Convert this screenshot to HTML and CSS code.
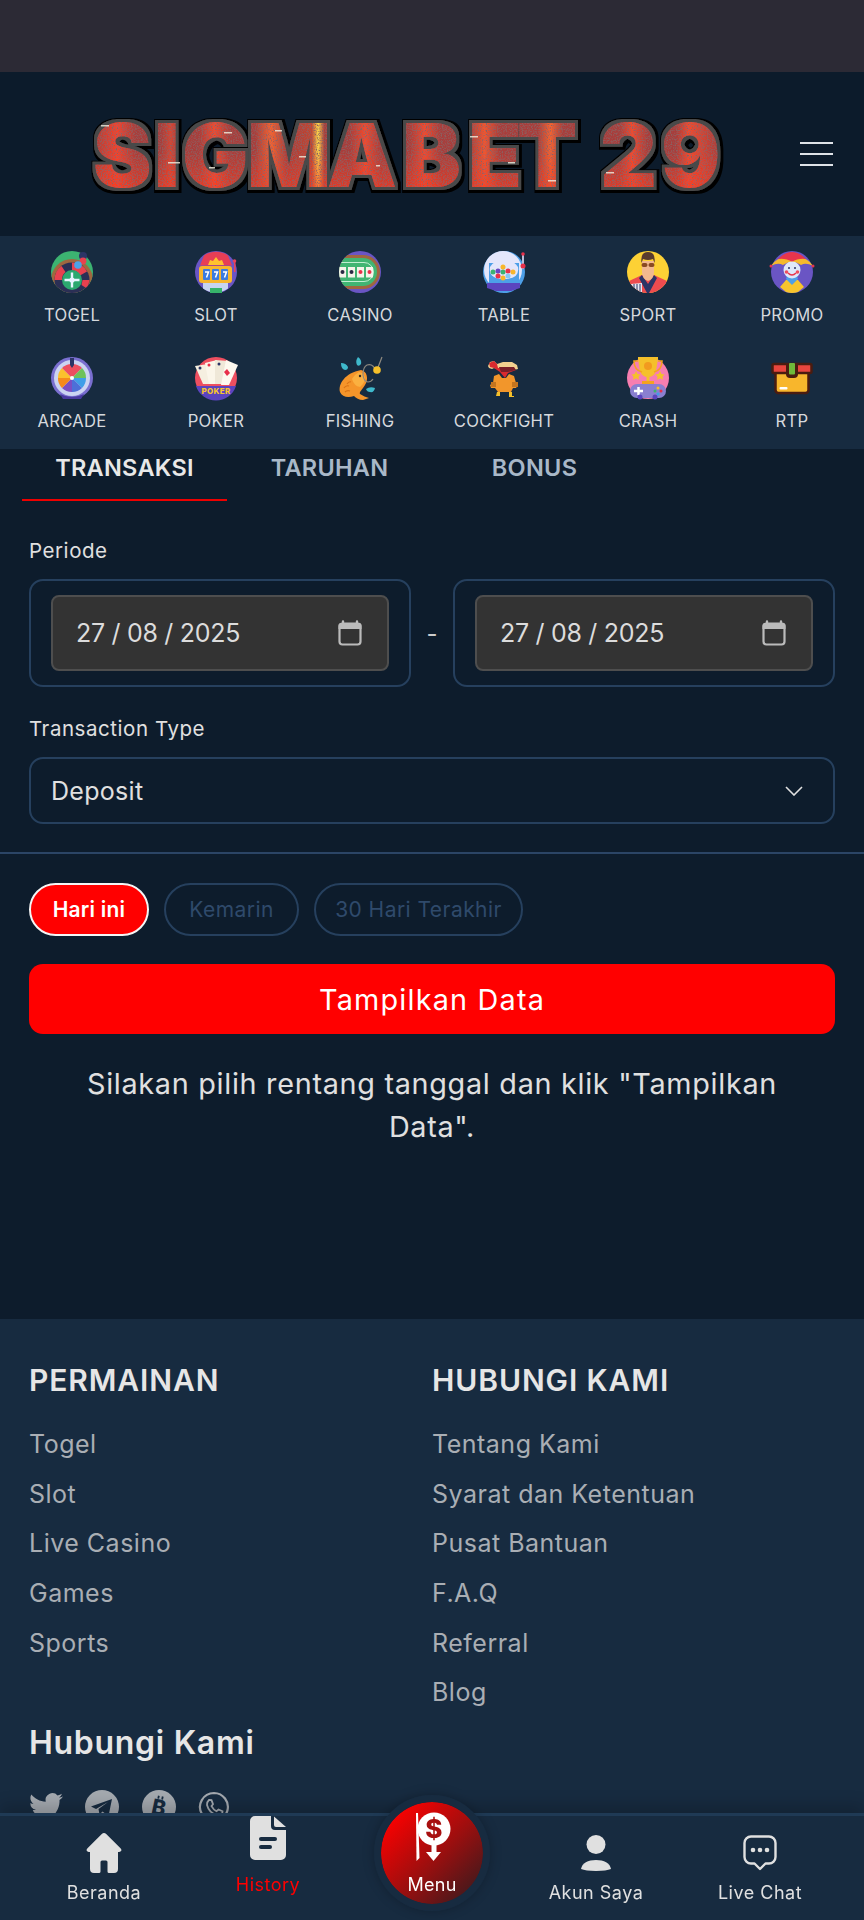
FILE: index.html
```html
<!DOCTYPE html>
<html lang="id">
<head>
<meta charset="utf-8">
<title>SIGMABET29</title>
<link rel="stylesheet" href="styles.css">
</head>
<body>
<div class="status"></div>
<header class="head">
  <svg class="logo" width="660" height="100" viewBox="0 0 660 100" role="img" aria-label="SIGMABET 29">
    <defs>
      <clipPath id="c42"><circle cx="21" cy="21" r="21"/></clipPath>
      <linearGradient id="flame" x1="12" y1="0" x2="640" y2="0" gradientUnits="userSpaceOnUse">
        <stop offset="0" stop-color="#a83c3a"/><stop offset=".04" stop-color="#f5432a"/><stop offset=".07" stop-color="#a93d3b"/>
        <stop offset=".11" stop-color="#a93d3b"/><stop offset=".125" stop-color="#d8452f"/><stop offset=".14" stop-color="#a93d3b"/>
        <stop offset=".17" stop-color="#a93d3b"/><stop offset=".195" stop-color="#f5492a"/><stop offset=".22" stop-color="#a93d3b"/>
        <stop offset=".26" stop-color="#a93d3b"/><stop offset=".285" stop-color="#f8642c"/><stop offset=".31" stop-color="#a93d3b"/>
        <stop offset=".35" stop-color="#c4452e"/><stop offset=".36" stop-color="#ffd84a"/><stop offset=".37" stop-color="#a93d3b"/>
        <stop offset=".41" stop-color="#a93d3b"/><stop offset=".435" stop-color="#f5492a"/><stop offset=".46" stop-color="#a93d3b"/>
        <stop offset=".505" stop-color="#a93d3b"/><stop offset=".53" stop-color="#f5492a"/><stop offset=".555" stop-color="#a93d3b"/>
        <stop offset=".6" stop-color="#a93d3b"/><stop offset=".625" stop-color="#f5552a"/><stop offset=".65" stop-color="#a93d3b"/>
        <stop offset=".71" stop-color="#a93d3b"/><stop offset=".73" stop-color="#f8642c"/><stop offset=".75" stop-color="#a93d3b"/>
        <stop offset=".84" stop-color="#a93d3b"/><stop offset=".86" stop-color="#f5492a"/><stop offset=".885" stop-color="#a93d3b"/>
        <stop offset=".93" stop-color="#a93d3b"/><stop offset=".95" stop-color="#f5492a"/><stop offset="1" stop-color="#a93d3b"/>
      </linearGradient>
      <linearGradient id="heat" x1="0" y1="10" x2="0" y2="82" gradientUnits="userSpaceOnUse">
        <stop offset=".45" stop-color="#ff3a1c" stop-opacity="0"/><stop offset="1" stop-color="#ff3a1c" stop-opacity=".65"/>
      </linearGradient>
      <pattern id="lava" patternUnits="userSpaceOnUse" width="660" height="100">
        <rect width="660" height="100" fill="url(#flame)"/>
        <rect width="660" height="100" fill="url(#heat)"/>
      </pattern>
      <filter id="burn" x="-5%" y="-20%" width="110%" height="140%">
        <feTurbulence type="fractalNoise" baseFrequency=".8" numOctaves="2" seed="4" result="n"/>
        <feColorMatrix in="n" type="matrix" values="0 0 0 0 .25  0 0 0 0 .12  0 0 0 0 .12  0 0 0 3 -1.300" result="g"/>
        <feComposite in="g" in2="SourceAlpha" operator="in" result="grain"/>
        <feMorphology in="SourceAlpha" operator="dilate" radius="2.500" result="d1"/>
        <feFlood flood-color="#4a4a4a"/><feComposite in2="d1" operator="in" result="edge"/>
        <feMorphology in="SourceAlpha" operator="dilate" radius="5" result="d2"/>
        <feOffset in="d2" dx="1" dy="1" result="d3"/>
        <feFlood flood-color="#000"/><feComposite in2="d3" operator="in" result="blk"/>
        <feMerge><feMergeNode in="blk"/><feMergeNode in="edge"/><feMergeNode in="SourceGraphic"/><feMergeNode in="grain"/></feMerge>
      </filter>
    </defs>
    <text class="logo-text" y="79" fill="url(#lava)" filter="url(#burn)" x="13 74 102 167 247 322 388 437 590 520 581">SIGMABET 29</text>
    <g fill="#f4f0e0" opacity=".8"><rect x="21" y="17" width="8" height="1.500"/><rect x="88" y="54" width="12" height="1.500"/><rect x="129" y="59" width="6" height="1.500"/><rect x="144" y="24" width="8" height="1.500"/><rect x="195" y="22" width="7" height="1.500"/><rect x="219" y="48" width="7" height="1.500"/><rect x="296" y="57" width="4" height="1.500"/><rect x="390" y="28" width="8" height="1.500"/><rect x="428" y="54" width="7" height="1.500"/><rect x="468" y="72" width="8" height="1.500"/><rect x="526" y="64" width="8" height="1.500"/></g>
  </svg>
  <button class="burger" aria-label="Menu"><span></span><span></span><span></span></button>
</header>

<nav class="cats">
  <a class="cat"><svg class="ci" viewBox="0 0 42 42"><g clip-path="url(#c42)"><rect width="42" height="42" fill="#3cb371"/><circle cx="21" cy="29" r="21" fill="#a0673f"/><circle cx="21" cy="29" r="17.500" fill="#2b2f55"/><path d="M21 11.500a17.500 17.500 0 0 1 15 9l-7 4a9 9 0 0 0-8-5z" fill="#e8414f"/><path d="M3.500 29a17.500 17.500 0 0 1 7-14l4 6a10 10 0 0 0-3.500 8z" fill="#e8414f"/><path d="M38.500 29l-7 0-1 5 6 4z" fill="#e8414f"/></g><circle cx="21" cy="29" r="10" fill="#2ca86f"/><path d="M21 21.500v15M13.500 29h15" stroke="#e9f4ff" stroke-width="2.400"/><circle cx="21" cy="29" r="2.600" fill="#e9f4ff"/><circle cx="32" cy="5" r="4" fill="#2c3566"/><circle cx="32" cy="10" r="3.400" fill="#e8414f"/><circle cx="27" cy="14" r="3.800" fill="#4aa3e8"/></svg><span>TOGEL</span></a>
  <a class="cat"><svg class="ci" viewBox="0 0 42 42"><circle cx="21" cy="21" r="21" fill="#6a55c4"/><path d="M9 4.500a21 21 0 0 1 24 0l4 10H5z" fill="#e83e55"/><path d="M13 14l2-5 3 1 3-4 3 4 3-1 2 5z" fill="#ffc22e"/><rect x="4" y="15" width="33" height="17" rx="3" fill="#f8b62c"/><g fill="#3a7be0"><rect x="8" y="18" width="7" height="11" rx="1"/><rect x="17" y="18" width="7" height="11" rx="1"/><rect x="26" y="18" width="7" height="11" rx="1"/></g><path d="M10 21h3.500l-2 5.500M19 21h3.500l-2 5.500M28 21h3.500l-2 5.500" stroke="#fff" stroke-width="1.500" fill="none"/><rect x="39" y="11" width="1.500" height="10" fill="#e9415a"/><circle cx="39.500" cy="10" r="1.800" fill="#e9415a"/><path d="M8 32h25v5.500a21 21 0 0 1-25 0z" fill="#c7d4f0"/><rect x="15" y="37" width="12" height="5" fill="#37b36a"/></svg><span>SLOT</span></a>
  <a class="cat"><svg class="ci" viewBox="0 0 42 42"><g clip-path="url(#c42)"><rect width="42" height="42" fill="#6a55c4"/><path d="M0 4h24a17 17 0 0 1 0 34H0z" fill="#a0673f"/><path d="M0 7h24a14 14 0 0 1 0 28H0z" fill="#41b573"/><path d="M0 11.500h25a9.500 9.500 0 0 1 0 19H0" fill="none" stroke="#c2eed2" stroke-width="1"/><g fill="#f5f3ea"><rect x="0" y="16" width="7" height="10.500"/><rect x="9" y="16" width="7" height="10.500"/><rect x="18" y="16" width="7" height="10.500"/><rect x="27" y="16" width="7" height="10.500"/></g><g fill="#2a2a44"><circle cx="3.500" cy="21" r="2"/><circle cx="12.500" cy="21" r="2"/></g><g fill="#e8304a"><circle cx="21.500" cy="21" r="2"/><circle cx="30.500" cy="21" r="2"/></g></g></svg><span>CASINO</span></a>
  <a class="cat"><svg class="ci" viewBox="0 0 42 42"><circle cx="21" cy="21" r="21" fill="#4d9fe8"/><circle cx="20" cy="19" r="19" fill="#e4e6fb"/><path d="M6 12h30v22H6z" fill="#4d9fe8"/><path d="M7 16a16 14 0 0 1 28 0q2 12-14 12T7 16z" fill="#e4e6fb"/><circle cx="10" cy="21" r="2.500" fill="#3cb371"/><circle cx="15" cy="20" r="2.500" fill="#6a45c4"/><circle cx="20" cy="21" r="2.500" fill="#3cb371"/><circle cx="25" cy="20" r="2.500" fill="#e8304a"/><circle cx="30" cy="21" r="2.500" fill="#f8b62c"/><circle cx="20" cy="16" r="2.500" fill="#f8b62c"/><circle cx="15" cy="25" r="2.500" fill="#e8304a"/><circle cx="20" cy="27" r="2.500" fill="#f8b62c"/><circle cx="25" cy="25" r="2.500" fill="#86c8f5"/><path d="M4 32h33v5l-9 3H13l-9-3z" fill="#5b44bf"/><rect x="39" y="4" width="2" height="14" fill="#b9bedb"/><circle cx="40" cy="3" r="1.800" fill="#e8304a"/><circle cx="40" cy="15" r="2.500" fill="#e8304a"/></svg><span>TABLE</span></a>
  <a class="cat"><svg class="ci" viewBox="0 0 42 42"><circle cx="21" cy="21" r="21" fill="#fdd135"/><g clip-path="url(#c42)"><path d="M2 30l13-6h12l13 6v12H2z" fill="#ee4b4f"/><path d="M15 24l6 9 6-9 3 3-8 15h-2L12 27z" fill="#2c3566"/><path d="M4 33l11-1v10H6z" fill="#e8eaf5"/><path d="M7 33v9M10 33v9M13 33v9" stroke="#2c3566" stroke-width="1"/></g><path d="M15 10h12v11q0 7-6 9-6-2-6-9z" fill="#f2b98f"/><path d="M14.500 12Q13 1 21 1t6.500 11L26 8q-5 2-10 0z" fill="#5a3b2e"/><rect x="14.500" y="12" width="6" height="4" rx="2" fill="#8a4a22"/><rect x="21.500" y="12" width="6" height="4" rx="2" fill="#8a4a22"/></svg><span>SPORT</span></a>
  <a class="cat"><svg class="ci" viewBox="0 0 42 42"><circle cx="21" cy="21" r="21" fill="#6a55c4"/><path d="M0 15Q7 4 21 7q14-3 21 8-7-4-12-1-4-3-9-3t-9 3q-5-3-12 1" fill="#f5b92c"/><path d="M7 8Q14 1 21 1t14 7q-8-1-14 3-6-4-14-3z" fill="#e8354c"/><path d="M9 36l6-7h12l6 7-6 5q-6 2-12 0z" fill="#f8c52c"/><path d="M15 28l6 6 6-6-1-3H16z" fill="#4d9fe8"/><circle cx="21" cy="19" r="8.500" fill="#dfe8fa"/><circle cx="15.500" cy="21" r="1.800" fill="#ef4e5e"/><circle cx="26.500" cy="21" r="1.800" fill="#ef4e5e"/><circle cx="18" cy="17" r="1" fill="#2c3566"/><circle cx="24" cy="17" r="1" fill="#2c3566"/><path d="M17 22q4 4 8 0" stroke="#e8354c" stroke-width="1.500" fill="none"/><circle cx="0" cy="15" r="1.500" fill="#e8354c"/><circle cx="42" cy="15" r="1.500" fill="#e8354c"/></svg><span>PROMO</span></a>

  <a class="cat"><svg class="ci" viewBox="0 0 42 42"><circle cx="21" cy="21" r="21" fill="#7a6fd0"/><circle cx="21" cy="21" r="18" fill="#ccd4f2"/><path d="M21 21V7a14 14 0 0 1 10 4z" fill="#ee4f60"/><path d="M21 21l10-10a14 14 0 0 1 4 10z" fill="#6ec25b"/><path d="M21 21h14a14 14 0 0 1-4 10z" fill="#3f9ee8"/><path d="M21 21l10 10a14 14 0 0 1-10 4z" fill="#4d6fd8"/><path d="M21 21v14a14 14 0 0 1-10-4z" fill="#7a4fc4"/><path d="M21 21L11 31a14 14 0 0 1-4-10z" fill="#f58a1c"/><path d="M21 21H7a14 14 0 0 1 4-10z" fill="#fbc02d"/><path d="M21 21L11 11a14 14 0 0 1 10-4z" fill="#ee4f60"/><circle cx="21" cy="21" r="2" fill="#fff"/><path d="M19 8V1h4v7l-2 3z" fill="#2c3566"/><path d="M9 37q12 6 24 0l-3 5H12z" fill="#4a3aa0"/></svg><span>ARCADE</span></a>
  <a class="cat"><svg class="ci" viewBox="0 0 42 42"><circle cx="21" cy="21" r="21" fill="#ee4f60"/><path d="M1 29h40a21 21 0 0 1-40 0z" fill="#5b44bf"/><path d="M0 9l13-2 4 20H8z" fill="#f5efe0"/><path d="M10 6l12-3 4 24H14z" fill="#fbf6ea"/><path d="M20 3l13 1-2 23H20z" fill="#efe8d8"/><path d="M31 3l12 5-9 20H26z" fill="#fdf9ef"/><circle cx="5" cy="11" r="1.500" fill="#2c3566"/><circle cx="14" cy="8" r="1.500" fill="#e8304a"/><circle cx="24" cy="7" r="1.500" fill="#2c3566"/><path d="M29 15l3-3 3 4-3 3z" fill="#e8304a"/><text class="poker" x="21" y="37">POKER</text></svg><span>POKER</span></a>
  <a class="cat"><svg class="ci" viewBox="0 0 42 42"><path d="M22 13C28 14 30 22 26 28 23 33 20 35 21 37 24 39 27 40 30 41L24 43C20 43 17 41 15 39 9 41 3 40 1 35-1 27 6 16 22 13z" fill="#f5952a"/><path d="M20 15q6 1 6 8-2 5-5 7-6-1-8-8 3-5 7-7z" fill="#fbb040"/><circle cx="21" cy="19" r="1.200" fill="#3a2c20"/><path d="M5 31q2-3 5-2M8 27q2-3 4-2M6 35q2-2 5-1" stroke="#d97215" stroke-width="1.200" fill="none"/><path d="M2 6q5 0 7 4 0 3-3 3-4-1-4-7z" fill="#3fb9cc"/><path d="M19 0q4 3 3 7-2 3-4 1-2-4 1-8z" fill="#3fb9cc"/><path d="M27 32q4-3 9-1-1 5-5 4-3 0-4-3z" fill="#3fb9cc"/><path d="M43 0l-5 13M37 14q-3-8-9-6-4 2-4 10 1 7 5 7 3 0 5-3" stroke="#8f8a80" stroke-width="1.200" fill="none"/><circle cx="38" cy="13" r="3.800" fill="#f5c02a"/></svg><span>FISHING</span></a>
  <a class="cat"><svg class="ci" viewBox="0 0 42 42"><path d="M5 9l2-4 4-1 3 3 6-2 9 0 5 3 1 4-8 2-9-1-7-2-2 1-3-1z" fill="#f2d08f"/><path d="M6 6l5-2 3 3 1 4 10-1 8 3-8 3-3 5-5-6-6-4-4-1z" fill="#d92a2e"/><path d="M16 10l15 0 2 3-8 2H18z" fill="#7a1f28"/><path d="M11 19l5-2 3 4 4 0 3-4 5 2 2 7 2 2-2 3h-3l-2 4H15l-3-4H8l-1-3 3-2z" fill="#f2962b"/><path d="M8 25h5v5H8zM29 25h6v5h-6z" fill="#c5751f"/><path d="M14 35h3v4h-4zM26 35h3v4h2v1h-5z" fill="#f5c02a"/></svg><span>COCKFIGHT</span></a>
  <a class="cat"><svg class="ci" viewBox="0 0 42 42"><circle cx="21" cy="21" r="21" fill="#f77eb0"/><path d="M11 0h20v2l-2 12q-2 6-8 6-6 0-8-6L11 2z" fill="#f5c02a"/><path d="M11 4H7q0 9 8 11M31 4h4q0 9-8 11" fill="none" stroke="#f5a21f" stroke-width="1.600"/><circle cx="21" cy="9" r="4" fill="#f29a1f"/><rect x="19.500" y="19" width="3" height="6" fill="#f5c02a"/><rect x="15" y="24" width="12" height="3" fill="#f5a21f"/><path d="M9 14l1.500 3 3 .4-2 2.300.5 3-3-1.500-3 1.500.5-3-2-2.300 3-.4zM33 14l1.500 3 3 .4-2 2.300.5 3-3-1.500-3 1.500.5-3-2-2.300 3-.4z" fill="#f5c02a"/><rect x="3" y="27" width="36" height="14" rx="7" fill="#8a7fd0"/><path d="M7 34h9M11.500 30v8" stroke="#fff" stroke-width="2.500"/><circle cx="31" cy="31" r="1.500" fill="#f5c02a"/><circle cx="28" cy="34" r="1.500" fill="#3cb371"/><circle cx="34" cy="34" r="1.500" fill="#e8304a"/><circle cx="31" cy="37" r="1.500" fill="#3f9ee8"/><circle cx="13" cy="40" r="2.500" fill="#5b44bf"/><circle cx="28" cy="40" r="2.500" fill="#5b44bf"/></svg><span>CRASH</span></a>
  <a class="cat"><svg class="ci" viewBox="0 0 42 42"><rect x="4.500" y="12" width="33" height="24" rx="3" fill="#f8b62c" stroke="#4a1c10" stroke-width="2.500"/><rect x="1.500" y="7" width="39" height="9" rx="1.500" fill="#e9463e" stroke="#4a1c10" stroke-width="2.500"/><path d="M15 6h12v11a4 4 0 0 1-4 4h-4a4 4 0 0 1-4-4z" fill="#4a1c10"/><rect x="18" y="6" width="6" height="11.500" rx="1" fill="#6fb93a"/><rect x="8.500" y="30" width="8" height="2.500" rx="1" fill="#fff"/></svg><span>RTP</span></a>
</nav>

<main class="page">
  <div class="tabs">
    <a class="tab on">TRANSAKSI</a>
    <a class="tab">TARUHAN</a>
    <a class="tab">BONUS</a>
  </div>

  <section class="filters">
    <label class="lbl">Periode</label>
    <div class="range">
      <div class="shell"><div class="date"><span>27 / 08 / 2025</span>
        <svg class="cal" viewBox="0 0 26 26"><path d="M6 1.500v3M20 1.500v3" stroke="#bbb" stroke-width="2.400" stroke-linecap="round"/><path d="M4 3h18a2.500 2.500 0 0 1 2.500 2.500V9h-23V5.500A2.500 2.500 0 0 1 4 3z" fill="#bbb"/><rect x="2.500" y="3.500" width="21" height="21" rx="3" fill="none" stroke="#bbb" stroke-width="2.200"/></svg></div></div>
      <span class="dash">-</span>
      <div class="shell"><div class="date"><span>27 / 08 / 2025</span>
        <svg class="cal" viewBox="0 0 26 26"><path d="M6 1.500v3M20 1.500v3" stroke="#bbb" stroke-width="2.400" stroke-linecap="round"/><path d="M4 3h18a2.500 2.500 0 0 1 2.500 2.500V9h-23V5.500A2.500 2.500 0 0 1 4 3z" fill="#bbb"/><rect x="2.500" y="3.500" width="21" height="21" rx="3" fill="none" stroke="#bbb" stroke-width="2.200"/></svg></div></div>
    </div>
    <label class="lbl lbl-type">Transaction Type</label>
    <div class="select"><span>Deposit</span>
      <svg class="chev" viewBox="0 0 18 10"><path d="M1 1l8 8 8-8" fill="none" stroke="#e0e0e0" stroke-width="1.600"/></svg></div>
  </section>

  <hr class="rule">

  <section class="results">
    <div class="pills">
      <button class="pill on">Hari ini</button>
      <button class="pill">Kemarin</button>
      <button class="pill">30 Hari Terakhir</button>
    </div>
    <button class="go">Tampilkan Data</button>
    <p class="hint">Silakan pilih rentang tanggal dan klik "Tampilkan Data".</p>
  </section>
</main>

<footer class="foot">
  <div class="fcols">
    <div class="fcol">
      <h3 class="fh">PERMAINAN</h3>
      <ul class="flist"><li>Togel</li><li>Slot</li><li>Live Casino</li><li>Games</li><li>Sports</li></ul>
    </div>
    <div class="fcol">
      <h3 class="fh">HUBUNGI KAMI</h3>
      <ul class="flist"><li>Tentang Kami</li><li>Syarat dan Ketentuan</li><li>Pusat Bantuan</li><li>F.A.Q</li><li>Referral</li><li>Blog</li></ul>
    </div>
  </div>
  <h3 class="fh2">Hubungi Kami</h3>
  <div class="social">
    <svg class="so" viewBox="0 0 24 24"><path d="M23.953 4.570a10 10 0 0 1-2.825.775 4.958 4.958 0 0 0 2.163-2.723c-.951.555-2.005.959-3.127 1.184a4.920 4.920 0 0 0-8.384 4.482C7.690 8.095 4.067 6.130 1.640 3.162a4.822 4.822 0 0 0-.666 2.475c0 1.710.870 3.213 2.188 4.096a4.904 4.904 0 0 1-2.228-.616v.060a4.923 4.923 0 0 0 3.946 4.827 4.996 4.996 0 0 1-2.212.085 4.936 4.936 0 0 0 4.604 3.417 9.867 9.867 0 0 1-6.102 2.105c-.390 0-.779-.023-1.170-.067a13.995 13.995 0 0 0 7.557 2.209c9.053 0 13.998-7.496 13.998-13.985 0-.210 0-.420-.015-.630A9.935 9.935 0 0 0 24 4.590z" fill="#a4a9af"/></svg>
    <svg class="so" viewBox="0 0 34 34"><circle cx="17" cy="17" r="17" fill="#a4a9af"/><path d="M6 16.500L27 9l-3.500 17-6-4.500-3 3-1-5.500L23 12l-12 7z" fill="#172b40"/></svg>
    <svg class="so" viewBox="0 0 34 34"><circle cx="17" cy="17" r="17" fill="#a4a9af"/><g transform="rotate(12 17 17)"><text class="btc" x="17" y="25">B</text><path d="M14.500 6v3M18.500 6v3M14.500 25v3M18.500 25v3" stroke="#172b40" stroke-width="1.800"/></g></svg>
    <svg class="so so-wa" viewBox="0 0 34 34"><path d="M17 3A14 14 0 0 0 5 24.200L3 31l7-1.800A14 14 0 1 0 17 3z" fill="none" stroke="#a4a9af" stroke-width="2.200"/><path d="M12 10l2.500.2 1.500 4-1.500 2q1.800 3.500 5 5l2-1.700 4 1.800-.4 2.700q-2 2-4.600 1.500-8.500-2.500-10.500-10.500-.3-3 2-5z" fill="none" stroke="#a4a9af" stroke-width="1.800"/></svg>
  </div>
</footer>

<nav class="dock">
  <a class="dk"><svg class="dki home" viewBox="0 0 36 40"><path d="M18 0q1.200 0 2.200.9l14.300 14.400c1.800 1.700.8 3.700-1.500 3.700H32v17a4 4 0 0 1-4 4h-5a1.500 1.500 0 0 1-1.500-1.500V29a1.500 1.500 0 0 0-1.500-1.500h-4a1.500 1.500 0 0 0-1.500 1.500v9.500A1.500 1.500 0 0 1 13 40H8a4 4 0 0 1-4-4V19H3c-2.300 0-3.300-2-1.500-3.700L15.800.9Q16.800 0 18 0z" fill="#e0e0e0"/></svg><span>Beranda</span></a>
  <a class="dk dk-on"><svg class="dki doc" viewBox="0 0 36 44"><path d="M5 0h16v10a4 4 0 0 0 4 4h11v25a5 5 0 0 1-5 5H5a5 5 0 0 1-5-5V5a5 5 0 0 1 5-5z" fill="#e0e0e0"/><path d="M24 .5L36 11H26a2 2 0 0 1-2-2z" fill="#e0e0e0"/><rect x="9" y="21" width="18" height="4" rx="2" fill="#172b40"/><rect x="9" y="29" width="13" height="4" rx="2" fill="#172b40"/></svg><span>History</span></a>
  <a class="dk dk-mid" aria-label="Menu"><span class="orb"><svg class="orbi" viewBox="0 0 36 50"><circle cx="19" cy="17" r="16.500" fill="#fff"/><path d="M1 1l2 0 1.500 45-3 3z" fill="#fff"/><rect x="16.500" y="32" width="5" height="10" fill="#fff"/><path d="M11 40h15l-7.500 9z" fill="#fff"/><text class="dollar" x="19" y="26">$</text></svg><span class="orbt">Menu</span></span></a>
  <a class="dk"><svg class="dki" viewBox="0 0 32 36"><circle cx="16" cy="9.500" r="9.500" fill="#e0e0e0"/><path d="M1 34c1-6 7-9 15-9s14 3 15 9c-3 1-8 2-15 2s-12-1-15-2z" fill="#e0e0e0"/></svg><span>Akun Saya</span></a>
  <a class="dk"><svg class="dki" viewBox="0 0 34 36"><path d="M8 1.500h18a6.500 6.500 0 0 1 6.500 6.500v14a6.500 6.500 0 0 1-6.500 6.500h-3.500L17 34l-5.500-5.500H8A6.500 6.500 0 0 1 1.500 22V8A6.500 6.500 0 0 1 8 1.500z" fill="none" stroke="#e0e0e0" stroke-width="2.400" stroke-linejoin="round"/><circle cx="10" cy="15" r="2.300" fill="#e0e0e0"/><circle cx="17" cy="15" r="2.300" fill="#e0e0e0"/><circle cx="24" cy="15" r="2.300" fill="#e0e0e0"/></svg><span>Live Chat</span></a>
</nav>
</body>
</html>
```

FILE: styles.css
```css
* { box-sizing: border-box; }
html, body { margin: 0; padding: 0; }
body {
  width: 864px;
  height: 1920px;
  overflow: hidden;
  background: #0d1c2c;
  color: #e0e0e0;
  font-family: Inter, "Open Sans", "Liberation Sans", sans-serif;
}
a { color: inherit; text-decoration: none; }

.status { height: 72px; background: #2c2a35; }

.head {
  height: 164px;
  background: #0c1b2b;
  display: flex;
  align-items: flex-start;
  padding: 36px 31px 0 80px;
  justify-content: space-between;
}
.logo { display: block; overflow: visible; }
.logo-text { font-family: Inter, sans-serif; font-weight: 900; font-size: 88px; }
.burger {
  width: 33px;
  margin-top: 34px;
  padding: 0;
  border: 0;
  background: none;
  display: flex;
  flex-direction: column;
  gap: 9px;
}
.burger span { display: block; height: 2px; background: #dfe3e8; }

.cats {
  height: 213px;
  background: #172b40;
  display: grid;
  grid-template-columns: repeat(6, 144px);
  grid-template-rows: 106px 107px;
  padding-top: 15px;
}
.cat {
  display: flex;
  flex-direction: column;
  align-items: center;
  color: #d6d9dd;
  font-size: 16.6px;
  letter-spacing: .3px;
  line-height: 22px;
}
.ci { width: 42px; height: 42px; overflow: visible; margin-bottom: 11px; }
.poker { font: 800 8px Inter, sans-serif; fill: #f8c52c; text-anchor: middle; }

.page { height: 870px; }
.tabs { display: flex; padding: 0 22px; height: 53px; }
.tab {
  width: 205px;
  text-align: center;
  font-size: 23.5px;
  font-weight: 600;
  letter-spacing: .3px;
  line-height: 38px;
  color: #a9b8c8;
  height: 52px;
}
.tab.on { color: #e8e8e8; border-bottom: 2px solid #e00; }

.filters { padding: 35px 29px 0; }
.lbl { display: block; font-size: 20.5px; line-height: 28px; color: #e0e0e0; letter-spacing: .55px; }
.range { display: flex; align-items: center; margin-top: 14px; }
.shell {
  width: 382px;
  height: 108px;
  border: 2px solid #26405e;
  border-radius: 14px;
  padding: 14px 20px;
}
.dash { width: 42px; text-align: center; font-size: 24px; color: #ccc; }
.date {
  height: 76px;
  background: #333;
  border: 2px solid #4e4e4e;
  border-radius: 8px;
  padding: 0 24px 0 23px;
  display: flex;
  align-items: center;
  justify-content: space-between;
  font-size: 25px;
  letter-spacing: -.3px;
  color: #dcdcdc;
}
.cal { width: 26px; height: 26px; }
.lbl-type { margin-top: 28px; }
.select {
  margin-top: 14px;
  height: 67px;
  border: 2px solid #26405e;
  border-radius: 14px;
  padding: 0 30px 0 20px;
  display: flex;
  align-items: center;
  justify-content: space-between;
  font-size: 25px;
  letter-spacing: .3px;
}
.chev { width: 18px; height: 10px; }

.rule { border: 0; height: 2px; background: #2b4566; margin: 28px 0 0; }

.results { padding: 29px 29px 0; }
.pills { display: grid; grid-template-columns: 120px 135px 209px; gap: 15px; }
.pill {
  height: 53px;
  padding: 0;
  border: 2px solid #26405e;
  border-radius: 27px;
  background: none;
  color: #2f4a6b;
  font-family: inherit;
  font-size: 21px;
  letter-spacing: .45px;
}
.pill.on { background: #f00; border-color: #f5f5f5; color: #fff; font-weight: 600; letter-spacing: .2px; }
.go {
  display: block;
  width: 806px;
  height: 70px;
  margin-top: 28px;
  border: 0;
  border-radius: 14px;
  background: #f00;
  color: #fff;
  font-family: inherit;
  font-size: 28.8px;
  letter-spacing: 1.2px;
}
.hint {
  margin: 28px 20px 0;
  text-align: center;
  font-size: 28.8px;
  line-height: 43px;
  color: #e0e0e0;
  letter-spacing: .7px;
}

.foot { height: 601px; background: #172b40; padding: 43px 29px 0; }
.fcols { display: grid; grid-template-columns: 403px 1fr; }
.fh { margin: 0; font-size: 30px; font-weight: 600; line-height: 36px; color: #e6e6e6; letter-spacing: .9px; }
.flist { list-style: none; margin: 27px 0 0; padding: 0; }
.flist li { font-size: 25px; height: 49.7px; line-height: 38px; color: #a9aeb4; letter-spacing: .5px; }
.fh2 { margin: 0; font-size: 32px; font-weight: 600; line-height: 40px; color: #e6e6e6; letter-spacing: .7px; }
.social { display: flex; gap: 22.4px; margin-top: 27px; }
.so { width: 34px; height: 34px; }
.so-wa { margin-left: -1px; }
.btc { font: 800 21px Inter, sans-serif; fill: #172b40; text-anchor: middle; }

.dock {
  position: fixed;
  left: 0;
  right: 0;
  bottom: 0;
  height: 107px;
  background: #172b40;
  border-top: 3px solid #1f3a55;
  box-shadow: 0 -8px 14px rgba(0, 0, 0, .18);
  display: flex;
  padding: 0 22px;
}
.dk {
  width: 164px;
  display: flex;
  flex-direction: column;
  align-items: center;
  justify-content: flex-start;
  padding-top: 19px;
  font-size: 18px;
  letter-spacing: .5px;
  color: #e0e0e0;
}
.dk span { line-height: 22px; }
.dki { height: 36px; width: 36px; margin-bottom: 11px; }
.dki.home { height: 40px; margin-top: -2px; margin-bottom: 9px; }
.dk-on { padding-top: 0; color: #f00; }
.dk-on .doc { width: 36px; height: 44px; margin-bottom: 14px; }
.dk-mid { position: relative; padding: 0; }
.orb {
  position: absolute;
  top: -21px;
  left: 24px;
  width: 116px;
  height: 116px;
  border-radius: 50%;
  border: 7px solid #172b40;
  background: linear-gradient(135deg, #f00 10%, #9a0f0f 55%, #2a1c20 100%);
  background-clip: padding-box;
  box-shadow: 0 0 12px rgba(0, 0, 0, .25);
  display: flex;
  flex-direction: column;
  align-items: center;
  padding-top: 10px;
}
.orbi { width: 36px; height: 50px; margin-left: 2px; }
.dollar { font: 800 26px Inter, sans-serif; fill: #a81010; text-anchor: middle; }
.dk .orbt { color: #fff; font-size: 18px; letter-spacing: .3px; margin-top: 12px; line-height: 22px; }
```
